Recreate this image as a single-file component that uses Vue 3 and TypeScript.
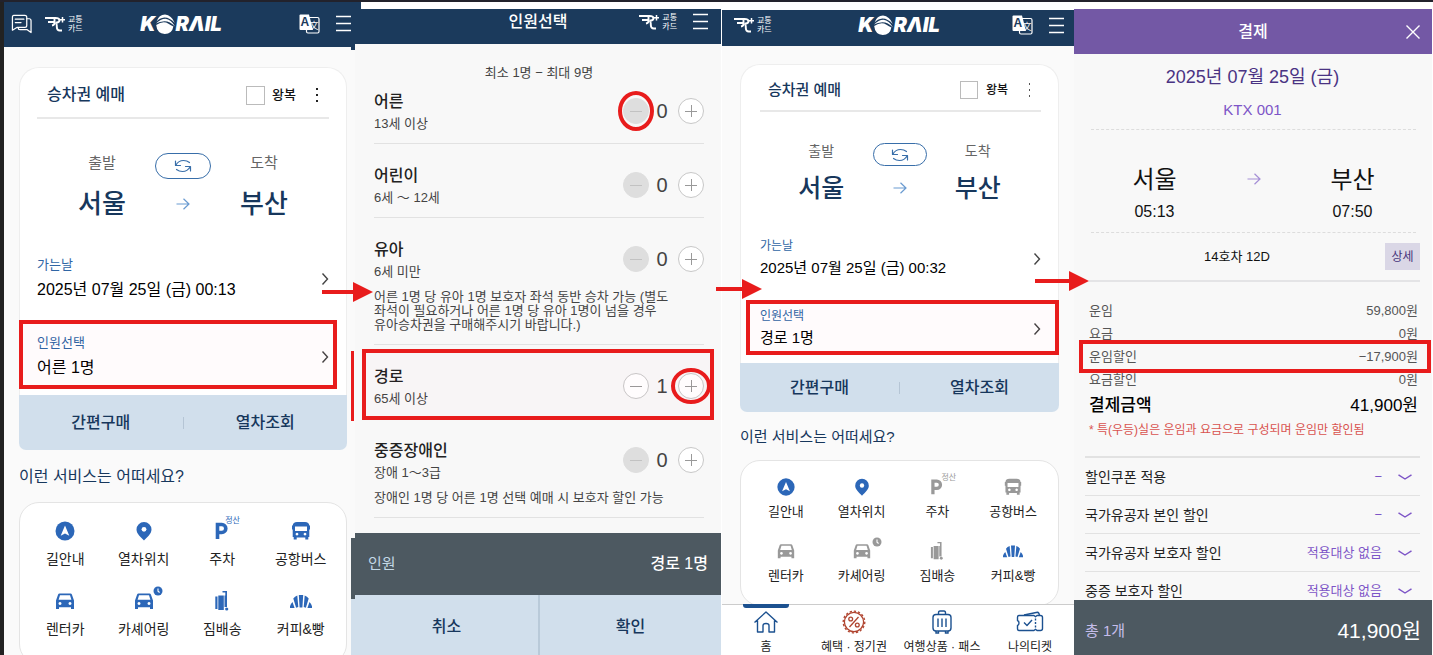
<script setup lang="ts">
import { ref } from 'vue'

interface Service {
  label: string
  icon: string
  active: boolean
  tag?: string
}

interface Home {
  id: string
  chat: boolean
  date: string
  party: string
  services: Service[]
  tabs: boolean
}

interface Passenger {
  name: string
  age: string
  count: number
  note?: string
  mark?: 'minus' | 'plus'
}

const serviceBase: Omit<Service, 'active'>[] = [
  { label: '길안내', icon: 'nav' },
  { label: '열차위치', icon: 'pin' },
  { label: '주차', icon: 'parking', tag: '정산' },
  { label: '공항버스', icon: 'bus' },
  { label: '렌터카', icon: 'car' },
  { label: '카셰어링', icon: 'share' },
  { label: '짐배송', icon: 'bag' },
  { label: '커피&빵', icon: 'bread' },
]

const dimmed = ['parking', 'bus', 'car', 'share', 'bag']

const homes: Home[] = [
  {
    id: 'before',
    chat: true,
    date: '2025년 07월 25일 (금) 00:13',
    party: '어른 1명',
    services: serviceBase.map((s) => ({ ...s, active: true })),
    tabs: false,
  },
  {
    id: 'after',
    chat: false,
    date: '2025년 07월 25일 (금) 00:32',
    party: '경로 1명',
    services: serviceBase.map((s) => ({ ...s, active: !dimmed.includes(s.icon) })),
    tabs: true,
  },
]

const tabs = [
  { label: '홈', icon: 'home' },
  { label: '혜택 · 정기권', icon: 'percent' },
  { label: '여행상품 · 패스', icon: 'luggage' },
  { label: '나의티켓', icon: 'ticket' },
]

const passengers = ref<Passenger[]>([
  { name: '어른', age: '13세 이상', count: 0, mark: 'minus' },
  { name: '어린이', age: '6세 ～ 12세', count: 0 },
  {
    name: '유아',
    age: '6세 미만',
    count: 0,
    note: '어른 1명 당 유아 1명 보호자 좌석 동반 승차 가능 (별도\n좌석이 필요하거나 어른 1명 당 유아 1명이 넘을 경우\n유아승차권을 구매해주시기 바랍니다.)',
  },
  { name: '경로', age: '65세 이상', count: 1, mark: 'plus' },
  {
    name: '중증장애인',
    age: '장애 1～3급',
    count: 0,
    note: '장애인 1명 당 어른 1명 선택 예매 시 보호자 할인 가능',
  },
])

const fees = [
  { label: '운임', value: '59,800원', marked: false },
  { label: '요금', value: '0원', marked: false },
  { label: '운임할인', value: '−17,900원', marked: true },
  { label: '요금할인', value: '0원', marked: false },
]

const discounts = [
  { label: '할인쿠폰 적용', value: '−' },
  { label: '국가유공자 본인 할인', value: '−' },
  { label: '국가유공자 보호자 할인', value: '적용대상 없음' },
  { label: '중증 보호자 할인', value: '적용대상 없음' },
]
</script>

<template>
  <svg class="defs" aria-hidden="true">
    <symbol id="i-chat" viewBox="0 0 22 20">
      <g fill="none" stroke="currentColor" stroke-width="1.3" stroke-linejoin="round" stroke-linecap="round">
        <path d="M3 1h11.500q2 0 2 2v8.500q0 2-2 2H6.500L1.500 16.500V3q0-2 1.500-2z" />
        <path d="M16.500 4.500h2.500q2 0 2 2V19l-4-3H9.500q-2 0-2-2" />
        <path d="M4.500 5h9M4.500 8.500h6" />
      </g>
    </symbol>
    <symbol id="i-rail" viewBox="0 0 20 16">
      <g fill="none" stroke="currentColor" stroke-width="1.900">
        <path d="M0 2h9.500v5q0 2-2.500 2.500M3 6h6.500" />
        <path d="M9.500 2h1q4 0 4 2.300T10.500 6.800q1.300.5 1.300 3v1.200q0 3.500 3 3.500h2.200" />
        <path d="M17.500 1v5.500M14.700 3.700h5.500" stroke-width="1.500" />
      </g>
    </symbol>
    <symbol id="i-ball" viewBox="0 0 20 20">
      <path d="M1.500 7.500Q4 .5 10 .5q6.500.5 9.800 8.500Q14.500 3.300 9.300 3.500 4.500 4 1.500 7.500z" fill="currentColor" />
      <path d="M1 9.600Q5.500 4.800 10.500 4.800q5.500.5 9.500 7.700Q15 7.300 9.500 7.200 4.500 7.400 1 9.600z" fill="currentColor" />
      <path d="M1.200 11Q8 6.500 13.500 9.700q2.500 1.800 4.900 2.800Q17 20 9.800 20 2 19.500 1.200 11z" fill="currentColor" />
    </symbol>
    <symbol id="i-menu" viewBox="0 0 15 17">
      <path d="M0 1.500h15M0 8.500h15M0 15.500h15" stroke="currentColor" stroke-width="1.600" />
    </symbol>
    <symbol id="i-swap" viewBox="0 0 18 14">
      <g fill="none" stroke="currentColor" stroke-width="1.200" stroke-linejoin="round" stroke-linecap="round">
        <path d="M1.500 2v4.500h5M2 6q2.500-4.500 7.500-4.500 3.500 0 6 2" />
        <path d="M16.500 12V7.500h-5M16 8q-2.500 4.500-7.500 4.500-3.500 0-6-2" />
      </g>
    </symbol>
    <symbol id="i-arrow" viewBox="0 0 14 12">
      <path d="M.5 6h12.500M7.500.7 13 6l-5.500 5.300" fill="none" stroke="currentColor" stroke-width="1.200" />
    </symbol>
    <symbol id="i-chevron" viewBox="0 0 8 14">
      <path d="M1.500 1.500 6.500 7l-5 5.500" fill="none" stroke="currentColor" stroke-width="1.400" />
    </symbol>
    <symbol id="i-down" viewBox="0 0 14 6">
      <path d="m.5.800 6.500 4.200 6.500-4.200" fill="none" stroke="currentColor" stroke-width="1.400" />
    </symbol>
    <symbol id="i-close" viewBox="0 0 14 14">
      <path d="m.5.500 13 13M13.500.500l-13 13" stroke="currentColor" stroke-width="1.400" />
    </symbol>
    <symbol id="i-nav" viewBox="0 0 22 22">
      <circle cx="11" cy="11" r="9.500" fill="currentColor" />
      <path d="m11 5.500 4.300 10.300-4.300-2.200-4.300 2.200z" fill="#fff" />
    </symbol>
    <symbol id="i-pin" viewBox="0 0 22 22">
      <path d="M11 2a7.500 7.500 0 0 0-7.500 7.500C3.500 14 8 17 11 20.500 14 17 18.500 14 18.500 9.500A7.500 7.500 0 0 0 11 2z" fill="currentColor" />
      <circle cx="11" cy="9.300" r="2.400" fill="#fff" />
    </symbol>
    <symbol id="i-parking" viewBox="0 0 22 22">
      <path d="M6.500 19V4.500h4.300a4 4 0 0 1 0 8H6.500" fill="none" stroke="currentColor" stroke-width="3.600" />
    </symbol>
    <symbol id="i-bus" viewBox="0 0 22 22">
      <path fill-rule="evenodd" fill="currentColor" d="M7 2h8q4 0 4.300 3.500h.7v4h-.7V17h-1v2.500h-3V17.500H6.700v2H3.700V17h-1V9.500H2v-4h.7Q3 2 7 2zM5 6.500v4.500h12V6.500zM7 12.700a1.400 1.400 0 1 0 .01 0zM15 12.700a1.400 1.400 0 1 0 .01 0z" />
    </symbol>
    <symbol id="i-car" viewBox="0 0 22 22">
      <path fill-rule="evenodd" fill="currentColor" d="M5.500 3.500h11q1 0 1.400 1L20 10.500V19h-3v-1.700H5V19H2v-8.500l2.100-6q.4-1 1.400-1zM6 5.300 4.600 9.800h12.800L16 5.300zM6 12a1.500 1.500 0 1 0 .01 0zM16 12a1.500 1.500 0 1 0 .01 0z" />
    </symbol>
    <symbol id="i-bag" viewBox="0 0 22 22">
      <path fill="currentColor" d="M4.300 6.500H6.500v12.500H4.300zM7.300 5.500h5.500V20H7.300zM13.500 5.500h.8V2.500H11.500V1h4.500v16h-2.500z" />
      <circle cx="15.700" cy="19" r="1.600" fill="currentColor" />
    </symbol>
    <symbol id="i-bread" viewBox="0 0 22 22">
      <path fill="currentColor" d="M8.800 5h4.400l-.8 12.500H9.600zM7.300 5.600 8.300 17l-2.200.7L3.300 8.500q1.500-2.100 4-2.900zM14.700 5.600 13.700 17l2.200.7 2.800-9.200q-1.500-2.100-4-2.900zM2.500 12 4.600 18H-.3q.3-3.700 2.800-6zM19.500 12l-2.100 6h4.900q-.3-3.700-2.800-6z" />
    </symbol>
    <symbol id="i-clock" viewBox="0 0 10 10">
      <circle cx="5" cy="5" r="4.500" fill="currentColor" />
      <path d="M5 2.500V5.200l1.600 1.300" fill="none" stroke="#fff" stroke-width="1.100" />
    </symbol>
    <symbol id="i-home" viewBox="0 0 26 24">
      <path d="M1.500 12.500 13 2l11.500 10.500M4.500 10.500V22H10v-6.500q0-2 3-2t3 2V22h5.500V10.500" fill="none" stroke="currentColor" stroke-width="1.400" stroke-linejoin="round" />
    </symbol>
    <symbol id="i-percent" viewBox="0 0 26 24">
      <g fill="none" stroke="currentColor" stroke-width="1.300">
        <circle cx="13" cy="12" r="9.600" />
        <circle cx="13" cy="12" r="10.800" stroke-dasharray="2.300 1.900" stroke-width="1.300" />
        <circle cx="9.700" cy="9" r="1.900" />
        <circle cx="16.300" cy="15" r="1.900" />
        <path d="m17.500 7-9 10" />
      </g>
    </symbol>
    <symbol id="i-luggage" viewBox="0 0 26 24">
      <g fill="none" stroke="currentColor" stroke-width="1.400">
        <rect x="4" y="4.500" width="18" height="16.500" rx="3" />
        <path d="M9.500 4.500V3q0-2 1.500-2h4q1.500 0 1.500 2v1.500M9 8.500v8.500M13 8.500v8.500M17 8.500v8.500M7 21v2h2.500v-2M16.500 21v2H19v-2" />
      </g>
    </symbol>
    <symbol id="i-ticket" viewBox="0 0 28 24">
      <g fill="none" stroke="currentColor" stroke-width="1.400" stroke-linejoin="round">
        <path d="M3 5.500h15l1.500 1.200L21 5.500h3.500q2 0 2 2v11q0 2-2 2H21l-1.500-1.200L18 20.500H3q-1.500 0-1.500-2v-3q1.500-.5 1.500-2.500t-1.500-2.500v-3q0-2 1.500-2z" />
        <path d="m8 5 13.500-2.800q1.500 0 2 3.300" />
        <path d="M19.500 8.500v9" stroke-dasharray="2 1.500" />
        <path d="m8 12.500 3 3 5-5.500" />
      </g>
    </symbol>
  </svg>

  <main class="board">
    <div class="edge"></div>

    <section v-for="home in homes" :key="home.id" class="screen home" :class="home.id">
      <header class="bar">
        <div class="bar-side">
          <button v-if="home.chat" type="button" class="icon-btn" aria-label="채팅">
            <svg class="chat"><use href="#i-chat" /></svg>
          </button>
          <a href="#" class="transit">
            <svg class="rail"><use href="#i-rail" /></svg>
            <span>교통<br />카드</span>
          </a>
        </div>
        <a href="#" class="logo">K<svg class="ball"><use href="#i-ball" /></svg>RΛIL</a>
        <div class="bar-side end">
          <button type="button" class="icon-btn" aria-label="언어">
            <svg class="lang" viewBox="0 0 21 20">
              <rect x="7.500" y="3.500" width="12.500" height="15.500" rx="1.500" fill="none" stroke="#fff" stroke-width="1.200" />
              <path d="M1.500.5h8.500L14 16H1.500Q.5 16 .5 15V1.500q0-1 1-1z" fill="#fff" />
              <text x="1.500" y="12" class="latin">A</text>
              <text x="10.500" y="15" class="hanja">文</text>
            </svg>
          </button>
          <button type="button" class="icon-btn" aria-label="메뉴">
            <svg class="menu"><use href="#i-menu" /></svg>
          </button>
        </div>
      </header>

      <div class="body">
        <div class="booking">
          <div class="booking-head">
            <h2>승차권 예매</h2>
            <label><input type="checkbox" />왕복</label>
            <button type="button" class="dots" aria-label="더보기"><i></i><i></i><i></i></button>
          </div>
          <div class="route">
            <span class="way">출발</span>
            <button type="button" class="swap" aria-label="출발 도착 바꾸기">
              <svg><use href="#i-swap" /></svg>
            </button>
            <span class="way">도착</span>
            <strong>서울</strong>
            <svg class="to"><use href="#i-arrow" /></svg>
            <strong>부산</strong>
          </div>
          <button type="button" class="pick">
            <span><small>가는날</small><b>{{ home.date }}</b></span>
            <svg><use href="#i-chevron" /></svg>
          </button>
          <button type="button" class="pick marked">
            <span><small>인원선택</small><b>{{ home.party }}</b></span>
            <svg><use href="#i-chevron" /></svg>
          </button>
        </div>
        <div class="actions">
          <button type="button">간편구매</button>
          <i></i>
          <button type="button">열차조회</button>
        </div>
        <h3>이런 서비스는 어떠세요?</h3>
        <nav class="services">
          <a v-for="s in home.services" :key="s.label" href="#">
            <span class="glyph" :class="{ off: !s.active }">
              <svg><use :href="'#i-' + (s.icon === 'share' ? 'car' : s.icon)" /></svg>
              <em v-if="s.tag">{{ s.tag }}</em>
              <svg v-if="s.icon === 'share'" class="clock"><use href="#i-clock" /></svg>
            </span>
            {{ s.label }}
          </a>
        </nav>
      </div>

      <nav v-if="home.tabs" class="tabs">
        <a v-for="(t, i) in tabs" :key="t.label" href="#" :class="{ current: i === 0, sale: t.icon === 'percent' }">
          <svg><use :href="'#i-' + t.icon" /></svg>
          {{ t.label }}
        </a>
      </nav>
      <span v-if="home.tabs" class="arrow"></span>
    </section>

    <div class="sliver">
      <span class="sliver-top"></span>
      <span class="sliver-mid"></span>
      <span class="sliver-slate"></span>
      <span class="sliver-blue"></span>
    </div>

    <section class="screen party">
      <header class="bar">
        <div></div>
        <h1>인원선택</h1>
        <div class="bar-side end">
          <a href="#" class="transit">
            <svg class="rail"><use href="#i-rail" /></svg>
            <span>교통<br />카드</span>
          </a>
          <button type="button" class="icon-btn" aria-label="메뉴">
            <svg class="menu"><use href="#i-menu" /></svg>
          </button>
        </div>
      </header>
      <div class="body">
        <p class="limit">최소 1명 − 최대 9명</p>
        <ul>
          <li v-for="p in passengers" :key="p.name" :class="{ marked: p.mark === 'plus', noted: p.note }">
            <div class="line">
              <div>
                <h2>{{ p.name }}</h2>
                <p>{{ p.age }}</p>
              </div>
              <div class="stepper">
                <button type="button" :disabled="p.count === 0" :class="{ ring: p.mark === 'minus' }" :aria-label="p.name + ' 빼기'" @click="p.count--">
                  <i></i>
                </button>
                <output>{{ p.count }}</output>
                <button type="button" class="plus" :class="{ ring: p.mark === 'plus' }" :aria-label="p.name + ' 더하기'" @click="p.count++">
                  <i></i>
                </button>
              </div>
            </div>
            <p v-if="p.note" class="note">{{ p.note }}</p>
          </li>
        </ul>
      </div>
      <div class="summary"><span>인원</span><b>경로 1명</b></div>
      <div class="confirm">
        <button type="button">취소</button>
        <button type="button">확인</button>
      </div>
      <span class="arrow"></span>
    </section>

    <section class="screen pay">
      <header class="bar">
        <div></div>
        <h1>결제</h1>
        <div class="bar-side end">
          <button type="button" class="icon-btn" aria-label="닫기">
            <svg class="close"><use href="#i-close" /></svg>
          </button>
        </div>
      </header>
      <div class="body">
        <h2>2025년 07월 25일 (금)</h2>
        <p class="train">KTX 001</p>
        <div class="journey">
          <div><strong>서울</strong><time>05:13</time></div>
          <svg><use href="#i-arrow" /></svg>
          <div><strong>부산</strong><time>07:50</time></div>
        </div>
        <div class="seat">
          <span>14호차 12D</span>
          <button type="button">상세</button>
        </div>
        <dl>
          <div v-for="f in fees" :key="f.label" :class="{ marked: f.marked }">
            <dt>{{ f.label }}</dt>
            <dd>{{ f.value }}</dd>
          </div>
          <div class="total">
            <dt>결제금액</dt>
            <dd>41,900원</dd>
          </div>
        </dl>
        <p class="caution">* 특(우등)실은 운임과 요금으로 구성되며 운임만 할인됨</p>
        <div class="discounts">
          <button v-for="d in discounts" :key="d.label" type="button">
            <span>{{ d.label }}</span>
            <em>{{ d.value }}</em>
            <svg><use href="#i-down" /></svg>
          </button>
        </div>
      </div>
      <div class="summary"><span>총 1개</span><b>41,900원</b></div>
      <span class="arrow"></span>
    </section>
  </main>
</template>

<style>
body {
  margin: 0;
  background: #fff;
}
</style>

<style scoped>
* {
  box-sizing: border-box;
}
.defs {
  position: absolute;
  width: 0;
  height: 0;
}
.board {
  --red: #e81c1c;
  --navy: #1b3a5c;
  --slate: #4d5961;
  --pale: #d1dfec;
  display: grid;
  grid-template-columns: 4px 347fr 4px 366fr 1px 352fr 358fr 1px;
  grid-template-rows: minmax(0, 1fr);
  height: 100vh;
  overflow: hidden;
  border-top: 2px solid #22222c;
  font-family: 'Liberation Sans', 'Noto Sans CJK KR', sans-serif;
  color: #111;
}
h1, h2, h3, p, ul, dl, dd {
  margin: 0;
  padding: 0;
}
button {
  padding: 0;
  border: 0;
  background: none;
  font: inherit;
  color: inherit;
  cursor: pointer;
}
a {
  color: inherit;
  text-decoration: none;
}
small, b, strong, em {
  font-style: normal;
}
.edge {
  grid-column: 1;
  grid-row: 1;
  background: #222;
}
.screen {
  position: relative;
  grid-row: 1;
  display: flex;
  flex-direction: column;
  min-width: 0;
}
.body {
  flex: 1;
  min-height: 0;
  overflow: hidden;
}
.before { grid-column: 2; }
.sliver { grid-column: 3; grid-row: 1; }
.party { grid-column: 4; }
.after { grid-column: 6; }
.pay { grid-column: 7; }
.party, .pay {
  padding-top: 7px;
}
.after {
  padding-top: 8px;
}

/* top bars */
.bar {
  display: grid;
  grid-template-columns: 1fr auto 1fr;
  align-items: center;
  background: var(--navy);
  color: #fff;
}
.bar h1 {
  font-size: 16px;
  line-height: 24px;
  font-weight: 500;
}
.before .bar { height: 45px; padding: 0 0 2px 7px; }
.after .bar { height: 36px; padding: 0 10px 6px 12px; }
.party .bar { height: 35px; padding: 0 13px 10px; }
.pay .bar { height: 45px; padding: 0 12px; background: #7358a5; }
.bar-side {
  display: flex;
  align-items: center;
  gap: 13px;
}
.end {
  justify-content: flex-end;
  gap: 16px;
}
.icon-btn {
  display: flex;
}
.chat { width: 21px; height: 20px; }
.rail { width: 20px; height: 16px; }
.menu { width: 15px; height: 17px; }
.close { width: 14px; height: 14px; }
.lang { width: 21px; height: 20px; }
.latin {
  font: bold 12px 'Liberation Sans', sans-serif;
  fill: var(--navy);
}
.hanja {
  font: 9px 'Noto Sans CJK KR', sans-serif;
  fill: #fff;
}
.transit {
  display: flex;
  align-items: center;
  gap: 3px;
}
.transit span {
  font-size: 8px;
  line-height: 9px;
}
.logo {
  display: flex;
  align-items: center;
  font: italic 900 20px/20px Inter, 'Liberation Sans', sans-serif;
}
.ball {
  width: 20px;
  height: 20px;
}

/* booking home */
.home .body {
  background: #fafafa;
}
.before .body { padding: 20px 4px 0 15px; }
.after .body { padding: 18px 15px 0 18px; }
.booking {
  border: 1px solid #eee;
  border-bottom: 0;
  border-radius: 20px 20px 0 0;
  background: #fff;
}
.before .booking { padding-bottom: 6px; }
.after .booking { padding-bottom: 8px; }
.booking-head {
  display: flex;
  align-items: center;
  margin: 0 17px;
  padding: 5px 0 0 10px;
  height: 51px;
  border-bottom: 2px solid #e8e8e8;
}
.after .booking-head {
  height: 47px;
  margin: 0 17px 0 19px;
  padding-left: 8px;
}
.booking-head h2 {
  flex: 1;
  font-size: 16px;
  line-height: 24px;
  font-weight: 500;
  color: #17375c;
}
.booking-head label {
  display: flex;
  align-items: center;
  gap: 7px;
  font-size: 13px;
  line-height: 20px;
  font-weight: 500;
}
.booking-head input {
  appearance: none;
  width: 19px;
  height: 19px;
  margin: 0;
  border: 1px solid #bbb;
  background: #fff;
}
.dots {
  display: flex;
  flex-direction: column;
  align-items: center;
  gap: 4px;
  width: 24px;
  margin-left: 9px;
}
.dots i {
  width: 2px;
  height: 2px;
  background: #222;
}
.route {
  display: grid;
  grid-template-columns: 1fr 56px 1fr;
  grid-template-rows: 28px 32px;
  row-gap: 9px;
  justify-items: center;
  padding: 32px 29px 22px;
}
.way {
  font-size: 15px;
  line-height: 24px;
  color: #666;
}
.swap {
  display: flex;
  align-items: center;
  justify-content: center;
  align-self: end;
  width: 100%;
  height: 26px;
  border: 1px solid #386ea9;
  border-radius: 13px;
  color: #386ea9;
}
.swap svg { width: 18px; height: 14px; }
.route strong {
  font-size: 26px;
  line-height: 32px;
  font-weight: 500;
  color: #17375c;
}
.to {
  width: 14px;
  height: 12px;
  align-self: center;
  color: #6a9bd1;
}
.pick {
  position: relative;
  display: flex;
  align-items: center;
  justify-content: space-between;
  width: 100%;
  padding: 14px 17px 9px;
  text-align: left;
}
.pick small, .pick b {
  display: block;
  font-weight: 400;
}
.pick small {
  margin-bottom: 4px;
  font-size: 13px;
  line-height: 18px;
  color: #2f66a5;
}
.pick b {
  font-size: 16px;
  line-height: 24px;
  color: #000;
}
.pick svg {
  width: 8px;
  height: 14px;
  color: #444;
}
.before .marked { margin-top: 9px; }
.after .marked { margin-top: 15px; }
.marked::after {
  content: '';
  position: absolute;
  border: 4px solid var(--red);
  pointer-events: none;
}
.before .marked::after { inset: 0 9px 0 -1px; background: #ff003c04; }
.after .marked::after { inset: 0 -1px 0 5px; background: #ff003c04; }
.actions {
  display: grid;
  grid-template-columns: 1fr 1px 1fr;
  align-items: center;
  height: 55px;
  border-radius: 0 0 7px 7px;
  background: var(--pale);
  font-size: 16px;
  line-height: 24px;
  font-weight: 500;
  color: #17375c;
}
.actions i {
  height: 12px;
  background: #b5c5d5;
}
.home h3 {
  margin: 15px 0 13px;
  font-size: 16px;
  line-height: 24px;
  font-weight: 400;
  color: #17375c;
}
.services {
  display: grid;
  grid-template-columns: repeat(4, 1fr);
  row-gap: 21px;
  padding: 17px 6px 24px;
  border: 1px solid #e4e4e4;
  border-radius: 20px;
  background: #fff;
}
.services a {
  display: flex;
  flex-direction: column;
  align-items: center;
  gap: 7px;
  font-size: 14px;
  line-height: 20px;
  color: #222;
  white-space: nowrap;
}
.glyph {
  position: relative;
  height: 22px;
  color: #2c67b8;
}
.glyph svg {
  display: block;
  width: 22px;
  height: 22px;
}
.glyph.off { color: #999; }
.glyph em {
  position: absolute;
  top: -4px;
  left: 14px;
  font-size: 8px;
  line-height: 9px;
}
.glyph .clock {
  position: absolute;
  top: -4px;
  left: 20px;
  width: 10px;
  height: 10px;
}

.after .booking-head h2 { font-size: 15px; }
.after .booking-head label { font-size: 12px; gap: 8px; }
.after .booking-head input { width: 18px; height: 18px; }
.after .dots i { width: 1px; background: #555; }
.after .route {
  grid-template-columns: 1fr 54px 1fr;
  grid-template-rows: 26px 28px;
  row-gap: 8px;
  padding: 28px 29px;
}
.after .way { font-size: 14px; line-height: 22px; }
.after .swap { height: 23px; }
.after .route strong { font-size: 25px; line-height: 28px; }
.after .pick { padding: 8px 17px 6px 19px; }
.after .pick small { margin-bottom: 3px; font-size: 12px; line-height: 16px; }
.after .pick b { font-size: 15px; line-height: 22px; }
.after .actions { height: 49px; }
.after h3 { margin: 14px 0 12px; font-size: 15px; line-height: 22px; }
.after .services { row-gap: 20px; padding: 16px 7px 20px; }
.after .services a { gap: 6px; font-size: 13px; line-height: 18px; }
.after .glyph { height: 20px; }
.after .glyph svg:not(.clock) { width: 20px; height: 20px; }

.tabs {
  display: grid;
  grid-template-columns: repeat(4, 1fr);
  height: 51px;
  border-top: 1px solid #ccc;
  background: #fff;
}
.tabs a {
  position: relative;
  display: flex;
  flex-direction: column;
  align-items: center;
  gap: 4px;
  padding-top: 5px;
  font-size: 12px;
  line-height: 18px;
  color: #222;
  white-space: nowrap;
}
.tabs svg {
  width: 28px;
  height: 24px;
  flex: none;
  color: #1c5190;
}
.tabs .sale svg { color: #b0442f; }
.current::before {
  content: '';
  position: absolute;
  top: -1px;
  width: 46px;
  height: 4px;
  border-radius: 0 0 3px 3px;
  background: #1c5190;
}

/* edge of the screen lying beneath */
.sliver {
  position: relative;
  display: flex;
  flex-direction: column;
  background: #fafafa;
}
.sliver-top { height: 48px; background: var(--navy); }
.sliver-top::after {
  content: '';
  position: absolute;
  top: 0;
  left: 4px;
  width: 6px;
  height: 7px;
  background: var(--navy);
}
.sliver-mid { flex: 1; }
.sliver-mid::after {
  content: '';
  position: absolute;
  top: 349px;
  left: 0;
  width: 3px;
  height: 70px;
  background: var(--red);
}
.sliver-slate { height: 61px; background: var(--slate); }
.sliver-blue { height: 56px; background: var(--pale); }

/* passenger selection */
.party .body {
  padding: 18px 17px 0 19px;
  background: #f8f8f8;
}
.limit {
  font-size: 13px;
  line-height: 21px;
  text-align: center;
  color: #444;
}
.party ul { list-style: none; }
.party li {
  position: relative;
  padding: 22px 0 10px;
  border-bottom: 1px solid #e2e2e2;
}
.party li:first-child { padding-top: 9px; }
.party li.noted { padding-bottom: 12px; }
.line {
  display: flex;
  align-items: center;
  justify-content: space-between;
}
.line h2 {
  margin-bottom: 3px;
  font-size: 16px;
  line-height: 20px;
  font-weight: 500;
  color: #222;
}
.line p {
  font-size: 13px;
  line-height: 18px;
  color: #444;
}
.note {
  margin-top: 9px;
  font-size: 13px;
  line-height: 14px;
  white-space: pre;
  color: #444;
}
.stepper {
  display: flex;
  align-items: center;
  margin-bottom: 3px;
}
.stepper output {
  width: 29px;
  padding-right: 3px;
  font-size: 20px;
  line-height: 26px;
  text-align: center;
  color: #444;
}
.stepper button {
  position: relative;
  display: grid;
  place-items: center;
  width: 26px;
  height: 26px;
  border: 1px solid #c8c8c8;
  border-radius: 50%;
  background: #fff;
}
.stepper button:disabled {
  border-color: #dedede;
  background: #dedede;
}
.stepper i {
  width: 12px;
  height: 1px;
  background: #999;
}
.stepper button:disabled i { background: #c2c2c2; }
.plus i::before {
  content: '';
  display: block;
  width: 1px;
  height: 12px;
  margin: -6px auto 0;
  background: #999;
}
.ring::after {
  content: '';
  position: absolute;
  inset: -8px -6px;
  border: 4px solid var(--red);
  border-radius: 50%;
}
.plus.ring::after { inset: -6px -8px; }
.party li.marked::after { inset: 4px -10px -2px -12px; background: #ff003c03; }
.summary {
  display: flex;
  align-items: center;
  justify-content: space-between;
  height: 62px;
  padding: 0 13px;
  background: var(--slate);
  font-size: 15px;
  line-height: 24px;
  color: #c3d8e6;
}
.summary b {
  font-size: 16px;
  font-weight: 500;
  color: #fff;
}
.confirm {
  display: grid;
  grid-template-columns: 1fr 1fr;
  height: 60px;
  background: var(--pale);
  font-size: 16px;
  line-height: 24px;
  font-weight: 500;
  color: #17375c;
}
.confirm button { padding-top: 3px; }
.confirm button + button { border-left: 2px solid #b9cad9; }

/* payment */
.pay .body {
  padding: 10px 12px 0 15px;
  background: #f8f8f8;
}
.pay h2 {
  font-size: 18px;
  line-height: 26px;
  font-weight: 400;
  text-align: center;
  color: #4a3383;
}
.train {
  padding: 10px 0 9px;
  font-size: 15px;
  line-height: 20px;
  text-align: center;
  color: #7d55c7;
}
.pay h2, .train { padding-right: 4px; }
.journey {
  display: grid;
  grid-template-columns: repeat(3, 1fr);
  justify-items: center;
  margin: 0 4px 0 2px;
  padding: 35px 14px 10px;
  border: dashed #ddd;
  border-width: 1px 0;
}
.journey strong, .journey time {
  display: block;
  text-align: center;
}
.journey strong {
  margin-bottom: 7px;
  font-size: 24px;
  line-height: 30px;
  font-weight: 400;
}
.journey time {
  font-size: 16px;
  line-height: 20px;
}
.journey svg {
  width: 14px;
  height: 12px;
  margin-top: 8px;
  color: #a58fd6;
}
.seat {
  display: flex;
  align-items: center;
  padding: 10px 0;
  border-bottom: 2px solid #e4e4e6;
  font-size: 13px;
  line-height: 20px;
}
.seat span {
  flex: 1;
  text-align: center;
}
.seat button {
  width: 35px;
  height: 27px;
  background: #dad7e6;
  font-size: 12px;
  color: #46347a;
}
.pay dl {
  padding: 17px 2px 0 0;
}
.pay dl div {
  position: relative;
  display: flex;
  justify-content: space-between;
  font-size: 13px;
  line-height: 23px;
  color: #555;
}
.pay dl .marked::after { inset: -5px -13px -5px -10px; }
.pay dl .total {
  font-size: 17px;
  line-height: 30px;
  color: #000;
}
.total dt { font-weight: 500; }
.caution {
  font-size: 12px;
  line-height: 18px;
  color: #d9534f;
  white-space: nowrap;
}
.discounts {
  margin: 17px 0 0 -4px;
  border-top: 1px solid #e2e2e2;
}
.discounts button {
  display: flex;
  align-items: center;
  width: 100%;
  height: 38px;
  padding-right: 8px;
  border-top: 1px solid #e2e2e2;
  text-align: left;
  font-size: 14px;
  line-height: 20px;
  color: #222;
}
.discounts span { flex: 1; }
.discounts em {
  font-size: 13px;
  color: #7d55c7;
}
.discounts svg {
  width: 14px;
  height: 6px;
  margin-left: 16px;
  color: #7d55c7;
}
.pay .summary {
  height: 55px;
  padding: 7px 11px 0;
  color: #c5bdea;
}
.pay .summary b {
  font-size: 21px;
  font-weight: 400;
}

/* flow arrows between screens */
.arrow {
  position: absolute;
  z-index: 2;
  height: 4px;
  background: var(--red);
}
.arrow::after {
  content: '';
  position: absolute;
  top: -8px;
  left: 100%;
  border-left: 20px solid var(--red);
  border-top: 10px solid transparent;
  border-bottom: 10px solid transparent;
}
.party .arrow { top: 288px; left: -33px; width: 31px; }
.after .arrow { top: 285px; left: -6px; width: 26px; }
.pay .arrow { top: 277px; left: -39px; width: 34px; }
</style>
